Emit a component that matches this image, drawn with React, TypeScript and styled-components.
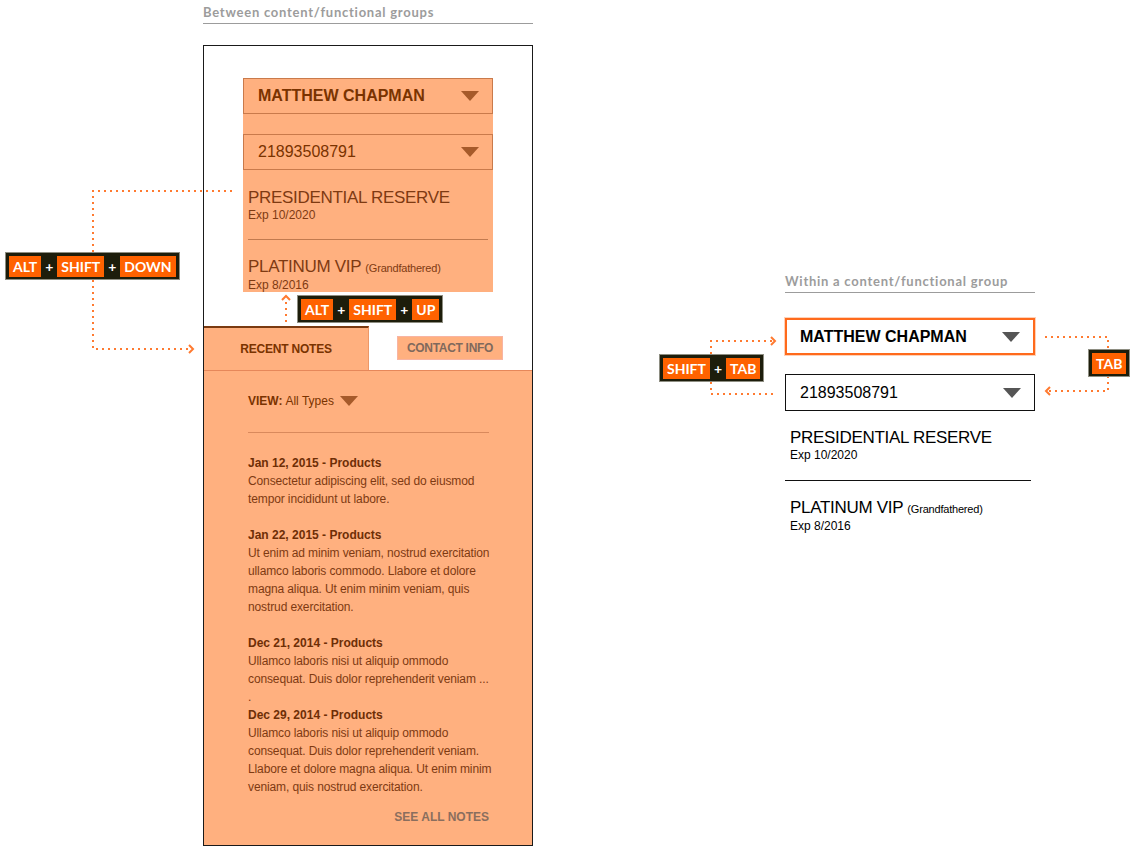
import React from 'react';
import styled, { createGlobalStyle } from 'styled-components';

const ORANGE = '#ffb07f';
const BROWN = '#7a3300';
const BODY_BROWN = '#7e3a12';

const Global = createGlobalStyle`
  html, body { margin: 0; padding: 0; background: #ffffff; }
  body {
    width: 1134px;
    height: 848px;
    overflow: hidden;
    font-family: "Liberation Sans", Arial, sans-serif;
  }
`;

const Page = styled.div`
  position: relative;
  display: flex;
  align-items: flex-start;
  width: 1134px;
  height: 848px;
`;

const LeftArtboard = styled.section`
  margin: 4px 0 0 203px;
  width: 330px;
  display: flex;
  flex-direction: column;
`;

const RightArtboard = styled.section`
  margin: 273px 0 0 252px;
  width: 250px;
  display: flex;
  flex-direction: column;
`;

const GroupHeading = styled.h2`
  margin: 0;
  padding-bottom: 3px;
  border-bottom: 1px solid #9c9c9c;
  font-family: Lato, "DejaVu Sans", sans-serif;
  font-weight: 700;
  font-size: 13px;
  line-height: 16px;
  letter-spacing: 0.75px;
  color: #9c9c9c;
  white-space: nowrap;
`;

const Panel = styled.div`
  margin-top: 21px;
  height: 801px;
  box-sizing: border-box;
  border: 1px solid #1a1a1a;
  padding-top: 32px;
  display: flex;
  flex-direction: column;
`;

const AccountGroup = styled.div`
  margin-left: 39px;
  width: 250px;
  height: 214px;
  background: ${ORANGE};
  display: flex;
  flex-direction: column;
`;

const RightGroup = styled.div`
  margin-top: 25px;
  display: flex;
  flex-direction: column;
`;

type Variant = 'warm' | 'focus' | 'plain';

const Select = styled.div<{ $variant: Variant; $gap?: number }>`
  flex: none;
  box-sizing: border-box;
  margin-top: ${(p) => p.$gap ?? 0}px;
  height: ${(p) => (p.$variant === 'warm' ? 36 : 37)}px;
  padding: 0 13px 0 ${(p) => (p.$variant === 'focus' ? 13 : 14)}px;
  display: flex;
  align-items: center;
  justify-content: space-between;
  background: ${(p) => (p.$variant === 'warm' ? ORANGE : '#ffffff')};
  border: ${(p) =>
    p.$variant === 'warm'
      ? '1px solid #c97a4b'
      : p.$variant === 'focus'
      ? '2px solid #ff6a1c'
      : '1px solid #111111'};
  box-shadow: ${(p) => (p.$variant === 'focus' ? '0 0 0 1px #ffd2b8' : 'none')};
  color: ${(p) => (p.$variant === 'warm' ? BROWN : '#000000')};
`;

const SelectValue = styled.span<{ $bold?: boolean }>`
  font-size: 16px;
  line-height: 20px;
  font-weight: ${(p) => (p.$bold ? 700 : 400)};
  white-space: nowrap;
`;

const Caret = styled.span<{ $color: string }>`
  width: 0;
  height: 0;
  border-left: 9px solid transparent;
  border-right: 9px solid transparent;
  border-top: 10px solid ${(p) => p.$color};
`;

const Membership = styled.div<{ $gap: number; $tone: string }>`
  flex: none;
  margin-top: ${(p) => p.$gap}px;
  padding-left: 5px;
  display: flex;
  flex-direction: column;
  color: ${(p) => p.$tone};
  white-space: nowrap;
`;

const MembershipName = styled.div`
  font-size: 17px;
  line-height: 20px;
  letter-spacing: -0.3px;
`;

const Qualifier = styled.span`
  font-size: 11px;
  letter-spacing: -0.2px;
`;

const Expiry = styled.div`
  font-size: 12px;
  line-height: 14px;
`;

const Rule = styled.div<{ $color: string; $left: number; $right: number; $gap: number }>`
  flex: none;
  margin: ${(p) => p.$gap}px ${(p) => p.$right}px 0 ${(p) => p.$left}px;
  height: 0;
  border-top: 1px solid ${(p) => p.$color};
`;

const TabBar = styled.div`
  margin-top: 34px;
  height: 44px;
  display: flex;
  align-items: center;
  border-bottom: 1px solid #e6875a;
  background: #ffffff;
`;

const ActiveTab = styled.div`
  align-self: stretch;
  width: 165px;
  box-sizing: border-box;
  border-top: 2px solid #7a3a10;
  border-right: 1px solid #ec9868;
  background: ${ORANGE};
  display: flex;
  align-items: center;
  justify-content: center;
  font-size: 12px;
  font-weight: 700;
  letter-spacing: -0.2px;
  color: ${BROWN};
`;

const TabButton = styled.div`
  margin-left: 28px;
  width: 106px;
  height: 24px;
  box-sizing: border-box;
  border: 1px solid #f8b4a2;
  background: ${ORANGE};
  display: flex;
  align-items: center;
  justify-content: center;
  font-size: 12px;
  font-weight: 700;
  letter-spacing: -0.3px;
  color: #80695c;
`;

const NotesPane = styled.div`
  flex: 1;
  background: ${ORANGE};
  padding: 21px 43px 0 44px;
  display: flex;
  flex-direction: column;
`;

const ViewFilter = styled.div`
  display: flex;
  align-items: center;
  height: 18px;
  font-size: 12px;
  color: ${BROWN};
`;

const FilterLabel = styled.b`
  font-weight: 700;
  margin-right: 3px;
`;

const FilterCaret = styled.span`
  margin-left: 6px;
  width: 0;
  height: 0;
  border-left: 9px solid transparent;
  border-right: 9px solid transparent;
  border-top: 10px solid #a65a2a;
`;

const NoteList = styled.div`
  margin-top: 21px;
  display: flex;
  flex-direction: column;
`;

const Note = styled.article<{ $after: number }>`
  margin-bottom: ${(p) => p.$after}px;
  font-size: 12px;
  line-height: 18px;
  white-space: nowrap;
`;

const NoteTitle = styled.div`
  font-weight: 700;
  color: #6e2e06;
`;

const NoteLine = styled.div`
  color: ${BODY_BROWN};
  letter-spacing: -0.12px;
`;

const SeeAll = styled.div`
  margin-top: 12px;
  text-align: right;
  font-size: 12px;
  line-height: 18px;
  font-weight: 700;
  color: #8a6e5e;
`;

const Connectors = styled.svg`
  position: absolute;
  left: 0;
  top: 0;
  z-index: 1;
  pointer-events: none;
`;

const KeyCombo = styled.div<{ $x: number; $y: number }>`
  position: absolute;
  left: ${(p) => p.$x}px;
  top: ${(p) => p.$y}px;
  z-index: 2;
  display: flex;
  align-items: center;
  padding: 3px 3px 2px;
  background: #1d1d0b;
  border: 1px solid #8e8e82;
  font-family: Lato, "DejaVu Sans", sans-serif;
  font-weight: 700;
  font-size: 14px;
  color: #ffffff;
`;

const Key = styled.span`
  height: 21px;
  line-height: 21px;
  padding: 0 4px;
  background: #ff6200;
`;

const Plus = styled.span`
  padding: 0 4px;
  line-height: 21px;
`;

const Combo = ({ x, y, keys }: { x: number; y: number; keys: string[] }) => (
  <KeyCombo $x={x} $y={y}>
    {keys.map((k, i) => (
      <React.Fragment key={k}>
        {i > 0 && <Plus>+</Plus>}
        <Key>{k}</Key>
      </React.Fragment>
    ))}
  </KeyCombo>
);

const notes = [
  {
    title: 'Jan 12, 2015 - Products',
    lines: ['Consectetur adipiscing elit, sed do eiusmod', 'tempor incididunt ut labore.'],
    after: 18,
  },
  {
    title: 'Jan 22, 2015 - Products',
    lines: [
      'Ut enim ad minim veniam, nostrud exercitation',
      'ullamco laboris commodo. Llabore et dolore',
      'magna aliqua. Ut enim minim veniam, quis',
      'nostrud exercitation.',
    ],
    after: 18,
  },
  {
    title: 'Dec 21, 2014 - Products',
    lines: ['Ullamco laboris nisi ut aliquip ommodo', 'consequat. Duis dolor reprehenderit veniam ...', '.'],
    after: 0,
  },
  {
    title: 'Dec 29, 2014 - Products',
    lines: [
      'Ullamco laboris nisi ut aliquip ommodo',
      'consequat. Duis dolor reprehenderit veniam.',
      'Llabore et dolore magna aliqua. Ut enim minim',
      'veniam, quis nostrud exercitation.',
    ],
    after: 0,
  },
];

type MembershipProps = {
  tone: string;
  ruleColor: string;
  ruleLeft: number;
  ruleRight: number;
  first: number;
  ruleGap: number;
  second: number;
};

const Memberships = ({ tone, ruleColor, ruleLeft, ruleRight, first, ruleGap, second }: MembershipProps) => (
  <>
    <Membership $gap={first} $tone={tone}>
      <MembershipName>PRESIDENTIAL RESERVE</MembershipName>
      <Expiry>Exp 10/2020</Expiry>
    </Membership>
    <Rule $color={ruleColor} $left={ruleLeft} $right={ruleRight} $gap={ruleGap} />
    <Membership $gap={second} $tone={tone}>
      <MembershipName>
        PLATINUM VIP <Qualifier>(Grandfathered)</Qualifier>
      </MembershipName>
      <Expiry>Exp 8/2016</Expiry>
    </Membership>
  </>
);

const DOTS = { stroke: '#ff7a30', strokeWidth: 2, strokeDasharray: '2 4', fill: 'none' };
const HEAD = { stroke: '#ff7a30', strokeWidth: 2, fill: 'none' };

export default function App() {
  return (
    <>
      <Global />
      <Page>
        <LeftArtboard>
          <GroupHeading>Between content/functional groups</GroupHeading>
          <Panel>
            <AccountGroup>
              <Select $variant="warm">
                <SelectValue $bold>MATTHEW CHAPMAN</SelectValue>
                <Caret $color="#a65a2a" />
              </Select>
              <Select $variant="warm" $gap={20}>
                <SelectValue>21893508791</SelectValue>
                <Caret $color="#a65a2a" />
              </Select>
              <Memberships
                tone={BODY_BROWN}
                ruleColor="#c27a4e"
                ruleLeft={5}
                ruleRight={5}
                first={18}
                ruleGap={17}
                second={17}
              />
            </AccountGroup>
            <TabBar>
              <ActiveTab>RECENT NOTES</ActiveTab>
              <TabButton>CONTACT INFO</TabButton>
            </TabBar>
            <NotesPane>
              <ViewFilter>
                <FilterLabel>VIEW:</FilterLabel>All Types
                <FilterCaret />
              </ViewFilter>
              <Rule $color="#d9895c" $left={0} $right={0} $gap={22} />
              <NoteList>
                {notes.map((n) => (
                  <Note key={n.title} $after={n.after}>
                    <NoteTitle>{n.title}</NoteTitle>
                    {n.lines.map((l, i) => (
                      <NoteLine key={i}>{l}</NoteLine>
                    ))}
                  </Note>
                ))}
              </NoteList>
              <SeeAll>SEE ALL NOTES</SeeAll>
            </NotesPane>
          </Panel>
        </LeftArtboard>

        <RightArtboard>
          <GroupHeading>Within a content/functional group</GroupHeading>
          <RightGroup>
            <Select $variant="focus">
              <SelectValue $bold>MATTHEW CHAPMAN</SelectValue>
              <Caret $color="#555555" />
            </Select>
            <Select $variant="plain" $gap={19}>
              <SelectValue>21893508791</SelectValue>
              <Caret $color="#555555" />
            </Select>
            <Memberships
              tone="#000000"
              ruleColor="#111111"
              ruleLeft={0}
              ruleRight={4}
              first={17}
              ruleGap={18}
              second={17}
            />
          </RightGroup>
        </RightArtboard>

        <Connectors width={1134} height={848} viewBox="0 0 1134 848">
          <path d="M232 191 H93 V349 H190" {...DOTS} />
          <path d="M189 345 L193 349 L189 353" {...HEAD} />
          <path d="M286 322 V302" {...DOTS} />
          <path d="M282 300 L286 296 L290 300" {...HEAD} />
          <path d="M772 341 H711 V394 H775" {...DOTS} />
          <path d="M771 337 L775 341 L771 345" {...HEAD} />
          <path d="M1045 337 H1108 V391 H1049" {...DOTS} />
          <path d="M1050 387 L1046 391 L1050 395" {...HEAD} />
        </Connectors>

        <Combo x={5} y={252} keys={['ALT', 'SHIFT', 'DOWN']} />
        <Combo x={297} y={295} keys={['ALT', 'SHIFT', 'UP']} />
        <Combo x={659} y={354} keys={['SHIFT', 'TAB']} />
        <Combo x={1088} y={349} keys={['TAB']} />
      </Page>
    </>
  );
}
